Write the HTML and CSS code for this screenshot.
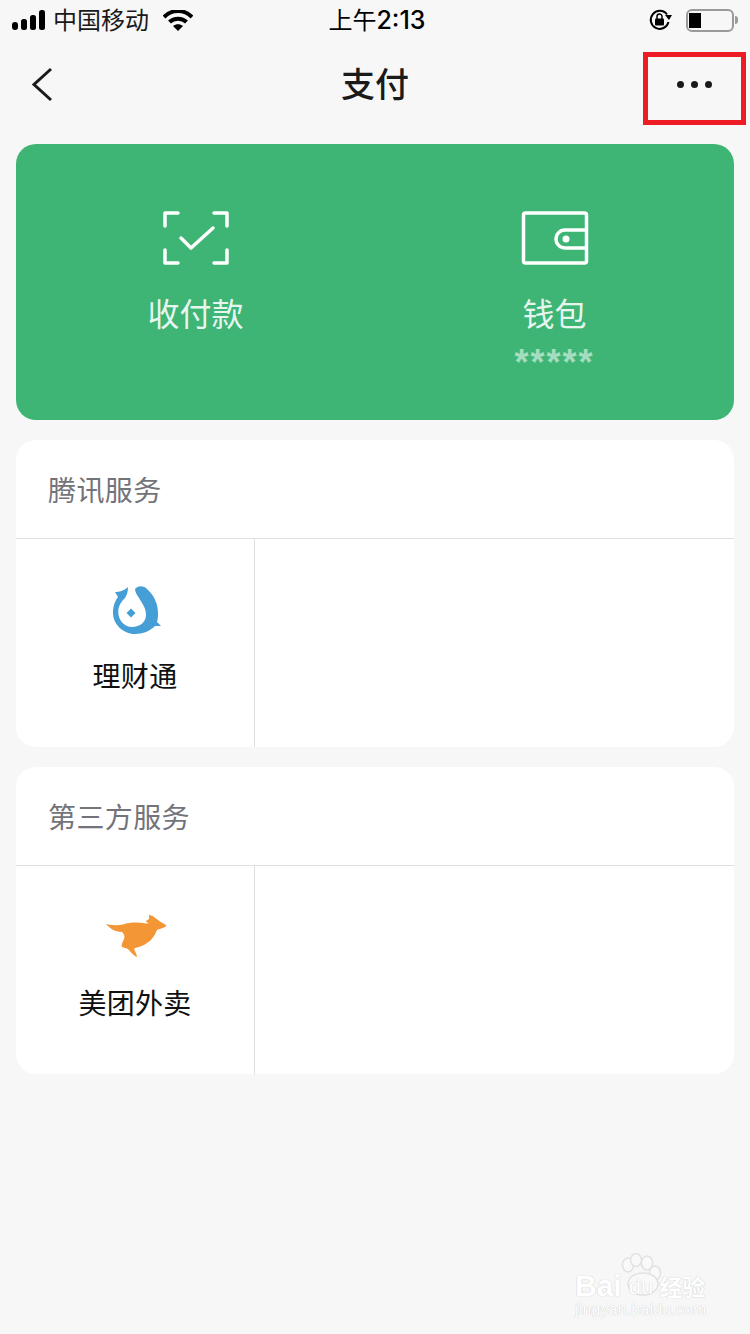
FILE: index.html

```html
<!DOCTYPE html>
<html lang="zh-CN">
<head>
  <meta charset="UTF-8">
  <meta name="viewport" content="width=device-width, initial-scale=1.0">
  <title>支付</title>
  <link rel="stylesheet" href="styles.css">
</head>
<body>
  <div class="status-bar">
    <div class="status-left">
      <svg class="signal" width="34" height="20" viewBox="0 0 34 20">
        <rect x="0" y="12" width="6" height="8" rx="3" fill="#000"/>
        <rect x="9" y="9" width="6" height="11" rx="2.5" fill="#000"/>
        <rect x="18" y="5" width="6" height="15" rx="2.5" fill="#000"/>
        <rect x="27" y="0" width="6" height="20" rx="2.5" fill="#000"/>
      </svg>
      <span class="carrier">中国移动</span>
      <svg class="wifi" width="30" height="21" viewBox="0 0 30 21">
        <path d="M1 7 C9 -1 21 -1 29 7" fill="none" stroke="#000" stroke-width="4"/>
        <path d="M6.500 12 C11 7.500 19 7.500 23.500 12" fill="none" stroke="#000" stroke-width="4"/>
        <path d="M10 16 C13 13.500 17 13.500 20 16 L15 21 Z" fill="#000"/>
      </svg>
    </div>
    <div class="status-time"><span class="time-cjk">上午</span>2:13</div>
    <div class="status-right">
      <svg class="lock" width="24" height="22" viewBox="0 0 24 22">
        <path d="M19.500 13 A9 9 0 1 1 18 5.500" fill="none" stroke="#000" stroke-width="2"/>
        <path d="M16 6 L23 6 L20 11 Z" fill="#000"/>
        <rect x="6" y="9.500" width="9" height="7" rx="1" fill="#000"/>
        <path d="M8 10 V7.500 A2.500 2.500 0 0 1 13 7.500 V10" fill="none" stroke="#000" stroke-width="1.500"/>
      </svg>
      <div class="battery"><div class="battery-level"></div></div>
      <div class="battery-cap"></div>
    </div>
  </div>

  <div class="nav-bar">
    <svg class="back" width="24" height="36" viewBox="0 0 24 36">
      <path d="M20 2 L3 17.500 L20 33" fill="none" stroke="#1a1a1a" stroke-width="3"/>
    </svg>
    <h1 class="nav-title">支付</h1>
    <div class="more-box">
      <span class="dot"></span><span class="dot"></span><span class="dot"></span>
    </div>
  </div>

  <div class="pay-card">
    <div class="pay-item">
      <svg width="68" height="56" viewBox="0 0 68 56">
        <g fill="none" stroke="#fff" stroke-width="3.500" stroke-linecap="round" stroke-linejoin="round">
          <path d="M16 3 H3 V16"/>
          <path d="M52 3 H65 V16"/>
          <path d="M3 40 V53 H16"/>
          <path d="M65 40 V53 H52"/>
          <path d="M19 28 L29 38 L51 18"/>
        </g>
      </svg>
      <div class="pay-label">收付款</div>
    </div>
    <div class="pay-item">
      <svg width="68" height="56" viewBox="0 0 68 56">
        <g fill="none" stroke="#fff" stroke-width="3.500" stroke-linejoin="round">
          <rect x="2.500" y="3" width="63" height="50" rx="2"/>
          <path d="M65 20 H44 A9 9 0 0 0 44 38 H65"/>
        </g>
        <circle cx="45" cy="29" r="3.500" fill="#fff"/>
      </svg>
      <div class="pay-label">钱包</div>
      <div class="pay-stars">*****</div>
    </div>
  </div>

  <div class="service-card">
    <div class="service-title">腾讯服务</div>
    <div class="service-row">
      <div class="service-cell">
        <svg class="fish" width="50" height="50" viewBox="-1 -1 50 50">
          <path d="M2 6 C6 6 11 5 15 1 C15 5 14 9 12 12 C8 16 5.300 20 5.300 26 C5.300 34 11 41 19 41 C27 41 33 36 33 29 C33 22 29 17 26 12 C24 9 22 6 22 3 C26 -1 31 0 34 3 C41 9 45 18 45 27 C45 30 45 33 44 36 L48 40 L42 40 C37 45 30 48 22 48 C10 48 0 38 0 27 C0 20 2 15 5 11 C4 9 3 8 2 6 Z" fill="#459fd6"/>
          <path d="M18 22.500 L22.500 27 L18 31.500 L13.500 27 Z" fill="#459fd6"/>
        </svg>
        <div class="cell-label">理财通</div>
      </div>
    </div>
  </div>

  <div class="service-card">
    <div class="service-title">第三方服务</div>
    <div class="service-row">
      <div class="service-cell">
        <svg class="roo" width="62" height="44" viewBox="0 0 62 44">
          <path d="M0 9 C6 10.500 12 10.500 17 9.500 C24 7 33 7 40 8.500 L43 8 C41 7.500 40 7 40 6 L43 4 L43 0 C45 0 47 1 48 2 C52 5 56 8 60 10 C60.500 11 60 11.500 59 12 C56 13.500 53 14 51 15 C49 20 46 25 41 28 C37 31 33 32 29 33 C28 34 28 35 29 36 L31 41 C31 42 30 42 29 41 C26 39 24 36 22 34 L16 32 C15 29 17 27 18 24 C19 21 18 19 16 17 C10 17 4 14 0 9 Z" fill="#f39636"/>
        </svg>
        <div class="cell-label">美团外卖</div>
      </div>
    </div>
  </div>

  <div class="watermark">
    <svg class="paw" width="44" height="46" viewBox="0 0 44 46">
      <g fill="#f9f9f9" stroke="#e2e2e2" stroke-width="1.500">
        <ellipse cx="7" cy="12" rx="5.500" ry="7"/>
        <ellipse cx="15" cy="7" rx="5.500" ry="6.500"/>
        <ellipse cx="26" cy="10" rx="5.500" ry="7"/>
        <ellipse cx="34" cy="20" rx="5.500" ry="7"/>
        <ellipse cx="22" cy="31" rx="15" ry="11"/>
      </g>
    </svg>
    <div class="wm-line">
      <span class="wm-bai">Bai</span><span class="wm-du">du</span><span class="wm-jy">经验</span>
    </div>
    <div class="wm-url">jingyan.baidu.com</div>
  </div>
</body>
</html>
```

FILE: styles.css

```css
* {
  box-sizing: border-box;
}
body {
  position: relative;
  width: 750px;
  height: 1334px;
  margin: 0;
  overflow: hidden;
  background: #f7f7f7;
  font-family: "Noto Sans CJK SC", "Noto Sans", sans-serif;
  color: #000;
}

/* status bar */
.status-bar {
  display: flex;
  align-items: center;
  justify-content: space-between;
  height: 42px;
  padding: 0 12px 2px;
}
.status-left, .status-right {
  display: flex;
  align-items: center;
  width: 220px;
}
.status-right {
  justify-content: flex-end;
}
.carrier {
  margin-left: 7px;
  padding-bottom: 2px;
  font-size: 24px;
  line-height: 34px;
  color: #1a1a1a;
}
.wifi {
  margin-left: 14px;
}
.status-time {
  margin-left: 4px;
  padding-bottom: 2px;
  font-family: Inter, "Noto Sans CJK SC", sans-serif;
  font-size: 25px;
  font-weight: 500;
  line-height: 34px;
}
.time-cjk {
  font-family: "Noto Sans CJK SC", sans-serif;
  font-size: 24px;
  font-weight: 400;
}
.lock {
  margin-right: 13px;
}
.battery {
  width: 48px;
  height: 23px;
  padding: 2px 1px;
  border: 2px solid #9a9a9a;
  border-radius: 6px;
}
.battery-level {
  width: 12px;
  height: 100%;
  background: #000;
}
.battery-cap {
  width: 3px;
  height: 8px;
  margin-left: 1px;
  background: #9a9a9a;
  border-radius: 0 3px 3px 0;
}

/* nav */
.nav-bar {
  position: relative;
  display: flex;
  align-items: center;
  justify-content: center;
  height: 86px;
  margin-bottom: 16px;
  padding-bottom: 6px;
}
.back {
  position: absolute;
  left: 31px;
  top: 25px;
}
.nav-title {
  margin: 0;
  font-size: 34px;
  font-weight: 500;
  color: #1a1a1a;
}
.more-box {
  position: absolute;
  left: 643px;
  top: 10px;
  display: flex;
  align-items: center;
  justify-content: center;
  gap: 7px;
  width: 103px;
  height: 73px;
  padding-bottom: 8px;
  border: 5px solid #ed1c24;
}
.dot {
  width: 7px;
  height: 7px;
  border-radius: 50%;
  background: #1a1a1a;
}

/* green card */
.pay-card {
  display: flex;
  height: 276px;
  margin: 0 16px 20px;
  padding-top: 66px;
  background: #3eb574;
  border-radius: 20px;
}
.pay-item {
  display: flex;
  flex-direction: column;
  align-items: center;
  width: 359px;
}
.pay-label {
  margin-top: 23px;
  font-size: 32px;
  line-height: 46px;
  color: rgba(255, 255, 255, 0.9);
}
.pay-stars {
  margin-top: 11px;
  font-family: "Liberation Sans", sans-serif;
  font-size: 36px;
  font-weight: 700;
  line-height: 34px;
  letter-spacing: 2px;
  color: rgba(255, 255, 255, 0.55);
}

/* service cards */
.service-card {
  height: 307px;
  margin: 0 16px 20px;
  background: #fff;
  border-radius: 20px;
  overflow: hidden;
}
.service-title {
  height: 99px;
  padding: 29px 32px 0;
  border-bottom: 1px solid #e0e0e0;
  font-size: 28px;
  line-height: 40px;
  letter-spacing: 0.4px;
  color: #73737a;
}
.service-row {
  display: flex;
  height: 208px;
}
.service-cell {
  display: flex;
  flex-direction: column;
  align-items: center;
  width: 239px;
  padding-top: 46px;
  border-right: 1px solid #e0e0e0;
}
.service-cell svg {
  height: 50px;
}
.fish, .roo {
  margin-left: 3px;
}
.cell-label {
  margin-top: 20px;
  font-size: 28px;
  line-height: 40px;
  letter-spacing: 0.3px;
  color: #111;
}

/* watermark */
.watermark {
  position: absolute;
  left: 575px;
  top: 1252px;
  width: 136px;
  height: 70px;
  color: #fff;
  text-shadow: 0 0 1px #cfcfcf, 0 0 1px #cfcfcf;
}
.paw {
  position: absolute;
  left: 46px;
  top: 1px;
}
.wm-line {
  position: absolute;
  left: 0;
  top: 21px;
  display: flex;
  align-items: center;
  height: 26px;
  line-height: 26px;
  font-family: "Liberation Sans", sans-serif;
  font-size: 30px;
  font-weight: 700;
}
.wm-du {
  margin: 2px 6px 0 7px;
  font-size: 22px;
  font-weight: 400;
}
.wm-jy {
  font-family: "Noto Sans CJK SC", sans-serif;
  font-size: 23px;
  font-weight: 700;
}
.wm-url {
  position: absolute;
  left: 0;
  top: 50px;
  font-family: "Liberation Sans", sans-serif;
  font-size: 16px;
  line-height: 15px;
  letter-spacing: 0.15px;
}
```
